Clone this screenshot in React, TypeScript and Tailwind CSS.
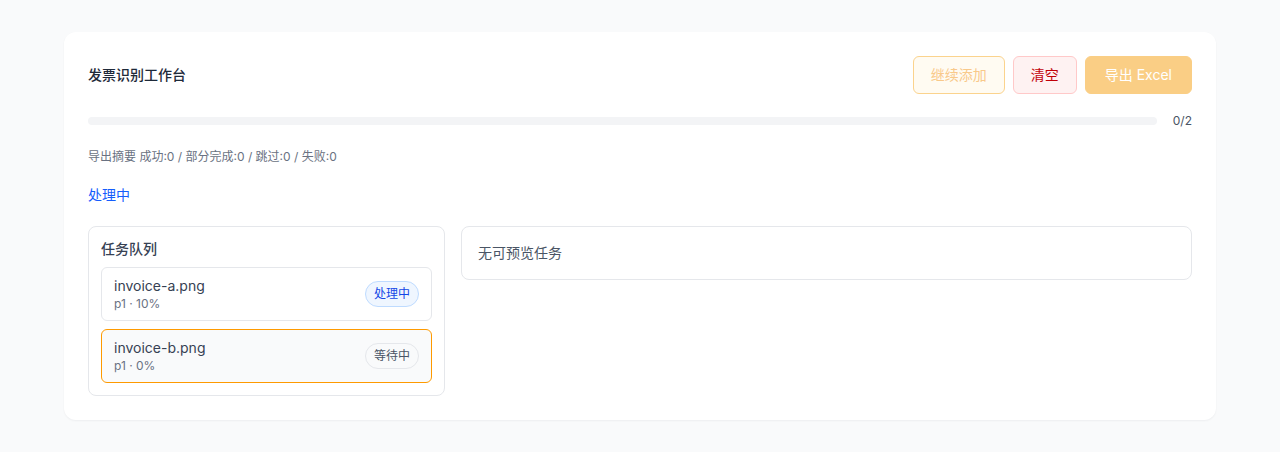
const font = { fontFamily: 'Inter, "Noto Sans CJK SC", sans-serif' };

interface Task {
  name: string;
  meta: string;
  status: string;
  active?: boolean;
}

const tasks: Task[] = [
  { name: "invoice-a.png", meta: "p1 · 10%", status: "处理中" },
  { name: "invoice-b.png", meta: "p1 · 0%", status: "等待中", active: true },
];

function StatusBadge({ status }: { status: string }) {
  const cls =
    status === "处理中"
      ? "border-blue-200 bg-blue-50 text-blue-700"
      : "border-gray-200 bg-gray-50 text-gray-600";
  return (
    <span className={`rounded-full border px-2 py-1 text-xs leading-4 ${cls}`}>
      {status}
    </span>
  );
}

export default function App() {
  return (
    <div className="min-h-screen bg-gray-50 py-8" style={font}>
      <div className="mx-auto max-w-6xl rounded-xl bg-white p-6 shadow-[0_1px_2px_rgba(15,23,42,0.05)]">
        <div className="flex items-center justify-between">
          <h1 className="text-sm font-medium text-gray-800">发票识别工作台</h1>
          <div className="flex gap-2">
            <button className="rounded-md border border-[#fbd38d] bg-[#fffbf2] px-[17px] py-2 text-sm leading-5 text-[#f9c98a]">
              继续添加
            </button>
            <button className="rounded-md border border-red-200 bg-red-50 px-[17px] py-2 text-sm leading-5 text-red-700">
              清空
            </button>
            <button className="rounded-md border border-[#face85] bg-[#face85] px-[19px] py-2 text-sm leading-5 text-white">
              导出 Excel
            </button>
          </div>
        </div>

        <div className="mt-[19px] flex h-4 items-center gap-4">
          <div className="h-2 flex-1 rounded-full bg-gray-100" />
          <span className="text-xs text-gray-600">0/2</span>
        </div>

        <p className="mt-5 text-xs leading-4 text-gray-500">
          导出摘要 成功:0 / 部分完成:0 / 跳过:0 / 失败:0
        </p>

        <p className="mt-5 text-sm leading-5 text-blue-600">处理中</p>

        <div className="mt-[21px] flex items-start gap-4">
          <div className="w-[357px] shrink-0 rounded-lg border border-gray-200 p-3">
            <h2 className="text-sm font-medium leading-5 text-gray-700">任务队列</h2>
            <div className="mt-2 flex flex-col gap-2">
              {tasks.map((t) => (
                <div
                  key={t.name}
                  className={`flex items-center justify-between rounded-md border px-3 py-2 ${
                    t.active ? "border-amber-500 bg-gray-50" : "border-gray-200 bg-white"
                  }`}
                >
                  <div>
                    <div className="text-sm leading-5 text-gray-700">{t.name}</div>
                    <div className="text-xs leading-4 text-gray-500">{t.meta}</div>
                  </div>
                  <StatusBadge status={t.status} />
                </div>
              ))}
            </div>
          </div>
          <div className="flex-1 rounded-lg border border-gray-200 p-4">
            <p className="text-sm leading-5 text-gray-600">无可预览任务</p>
          </div>
        </div>
      </div>
    </div>
  );
}
